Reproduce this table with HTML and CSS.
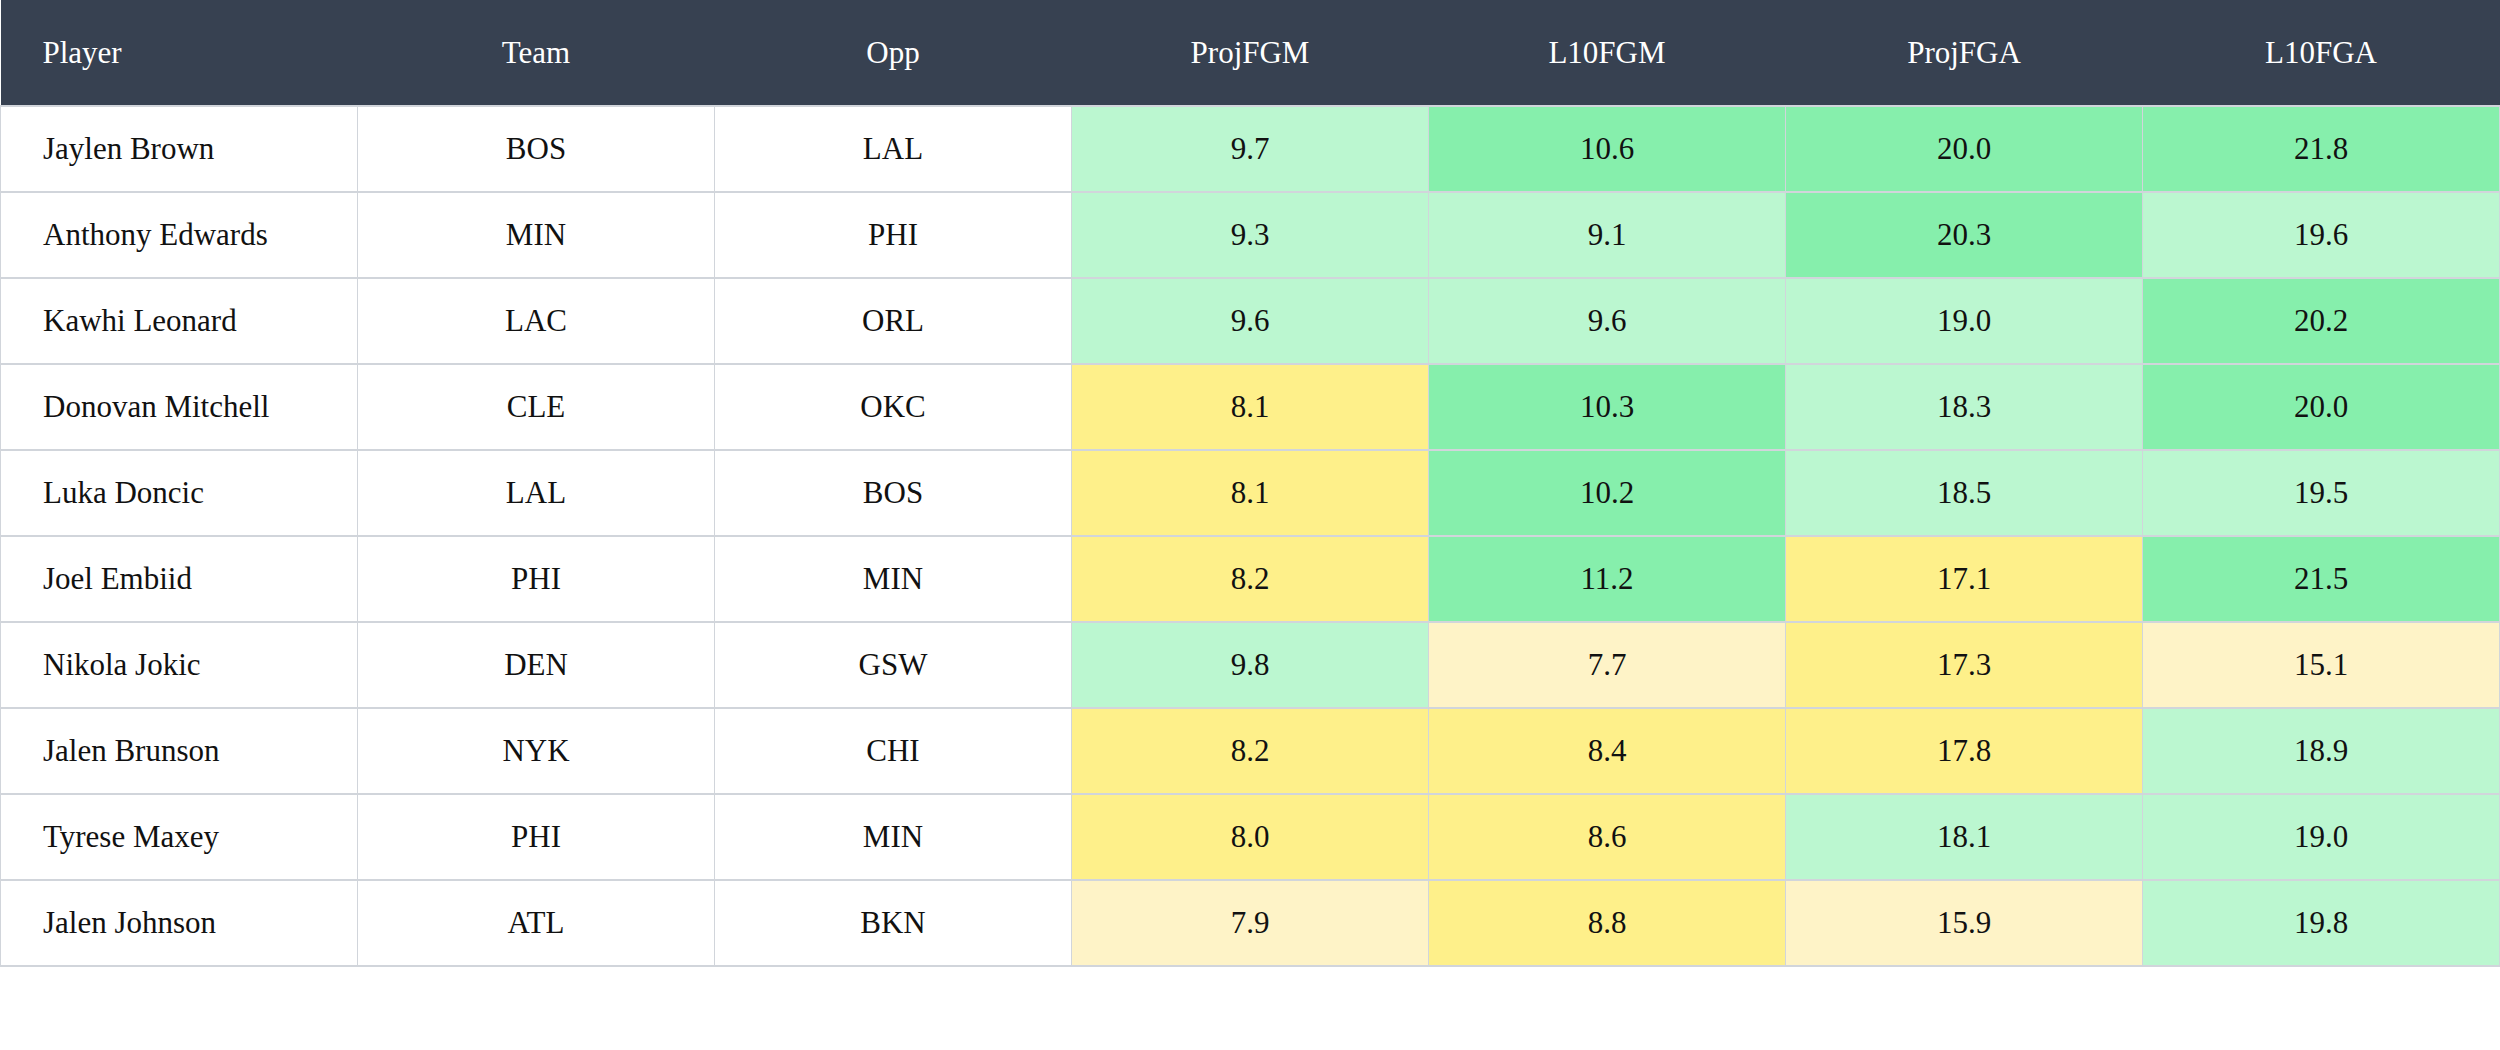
FILE: index.html
```html
<!DOCTYPE html>
<html lang="en">
<head>
<meta charset="utf-8">
<title>Player Projections</title>
<link rel="stylesheet" href="styles.css">
</head>
<body>
<table class="stats">
  <colgroup>
    <col><col><col><col><col><col><col>
  </colgroup>
  <thead>
    <tr>
      <th class="name">Player</th>
      <th>Team</th>
      <th>Opp</th>
      <th>ProjFGM</th>
      <th>L10FGM</th>
      <th>ProjFGA</th>
      <th>L10FGA</th>
    </tr>
  </thead>
  <tbody>
    <tr><td class="name">Jaylen Brown</td><td>BOS</td><td>LAL</td><td class="lg">9.7</td><td class="g">10.6</td><td class="g">20.0</td><td class="g">21.8</td></tr>
    <tr><td class="name">Anthony Edwards</td><td>MIN</td><td>PHI</td><td class="lg">9.3</td><td class="lg">9.1</td><td class="g">20.3</td><td class="lg">19.6</td></tr>
    <tr><td class="name">Kawhi Leonard</td><td>LAC</td><td>ORL</td><td class="lg">9.6</td><td class="lg">9.6</td><td class="lg">19.0</td><td class="g">20.2</td></tr>
    <tr><td class="name">Donovan Mitchell</td><td>CLE</td><td>OKC</td><td class="y">8.1</td><td class="g">10.3</td><td class="lg">18.3</td><td class="g">20.0</td></tr>
    <tr><td class="name">Luka Doncic</td><td>LAL</td><td>BOS</td><td class="y">8.1</td><td class="g">10.2</td><td class="lg">18.5</td><td class="lg">19.5</td></tr>
    <tr><td class="name">Joel Embiid</td><td>PHI</td><td>MIN</td><td class="y">8.2</td><td class="g">11.2</td><td class="y">17.1</td><td class="g">21.5</td></tr>
    <tr><td class="name">Nikola Jokic</td><td>DEN</td><td>GSW</td><td class="lg">9.8</td><td class="py">7.7</td><td class="y">17.3</td><td class="py">15.1</td></tr>
    <tr><td class="name">Jalen Brunson</td><td>NYK</td><td>CHI</td><td class="y">8.2</td><td class="y">8.4</td><td class="y">17.8</td><td class="lg">18.9</td></tr>
    <tr><td class="name">Tyrese Maxey</td><td>PHI</td><td>MIN</td><td class="y">8.0</td><td class="y">8.6</td><td class="lg">18.1</td><td class="lg">19.0</td></tr>
    <tr><td class="name">Jalen Johnson</td><td>ATL</td><td>BKN</td><td class="py">7.9</td><td class="y">8.8</td><td class="py">15.9</td><td class="lg">19.8</td></tr>
  </tbody>
</table>
</body>
</html>
```

FILE: styles.css
```css
html, body {
  margin: 0;
  padding: 0;
  background: #ffffff;
}

body {
  font-family: "Liberation Serif", "DejaVu Serif", serif;
  color: #111111;
}

.stats {
  width: 100%;
  border-collapse: collapse;
  table-layout: fixed;
}

.stats th {
  background: #374151;
  color: #ffffff;
  font-weight: 400;
  font-size: 31px;
  height: 105px;
  padding: 0;
  text-align: center;
  vertical-align: middle;
  border-bottom: 2px solid #d1d5db;
}

.stats td {
  height: 84px;
  padding: 0;
  font-size: 31px;
  text-align: center;
  vertical-align: middle;
  border-left: 1px solid #d1d5db;
  border-right: 1px solid #d1d5db;
  border-bottom: 2px solid #d1d5db;
  background: #ffffff;
}

.stats .name {
  text-align: left;
  padding-left: 42px;
}

.stats td.lg { background: #bbf7d0; }
.stats td.g  { background: #86efac; }
.stats td.y  { background: #fef08a; }
.stats td.py { background: #fef3c7; }
```
